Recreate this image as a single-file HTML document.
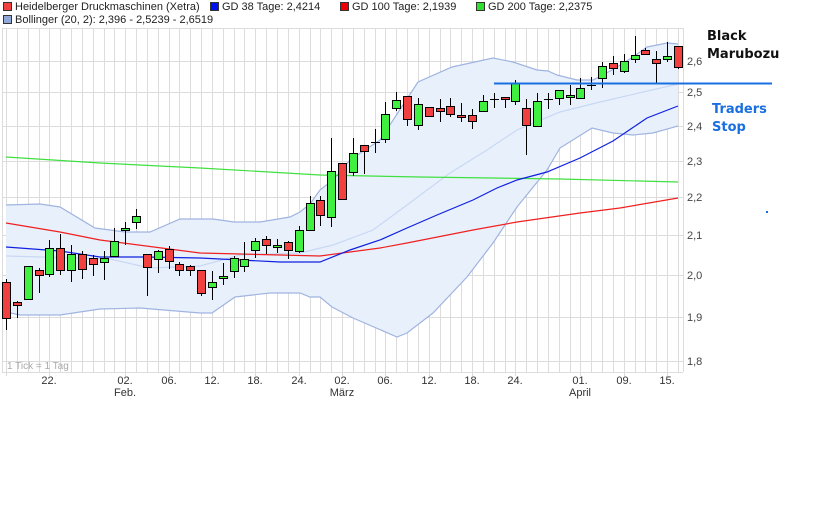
<!DOCTYPE html>
<html><head><meta charset="utf-8"><style>
body{margin:0;background:#fff;width:840px;height:525px;overflow:hidden;font-family:"Liberation Sans",sans-serif}
</style></head><body>
<svg width="840" height="525" viewBox="0 0 840 525" xmlns="http://www.w3.org/2000/svg" font-family="Liberation Sans, sans-serif">
<!-- legend -->
<g font-size="11" fill="#222">
<rect x="3.5" y="2.5" width="8" height="8" fill="#f04040" stroke="#333"/><text x="15" y="10">Heidelberger Druckmaschinen (Xetra)</text>
<rect x="210.5" y="2.5" width="8" height="8" fill="#0010ee" stroke="#333"/><text x="222" y="10">GD 38 Tage: 2,4214</text>
<rect x="340.5" y="2.5" width="8" height="8" fill="#ee0000" stroke="#333"/><text x="352" y="10">GD 100 Tage: 2,1939</text>
<rect x="476.5" y="2.5" width="8" height="8" fill="#30e030" stroke="#333"/><text x="488" y="10">GD 200 Tage: 2,2375</text>
<rect x="3.5" y="15.5" width="8" height="8" fill="#90a8d8" stroke="#333"/><text x="15" y="23">Bollinger (20, 2): 2,396 - 2,5239 - 2,6519</text>
</g>
<!-- grid -->
<g stroke="#dcdcdc" stroke-width="1">
<line x1="2" y1="28.5" x2="683" y2="28.5"/>
<line x1="2" y1="61.5" x2="683" y2="61.5"/>
<line x1="2" y1="92.5" x2="683" y2="92.5"/>
<line x1="2" y1="126.5" x2="683" y2="126.5"/>
<line x1="2" y1="161.5" x2="683" y2="161.5"/>
<line x1="2" y1="197.5" x2="683" y2="197.5"/>
<line x1="2" y1="235.5" x2="683" y2="235.5"/>
<line x1="2" y1="275.5" x2="683" y2="275.5"/>
<line x1="2" y1="317.5" x2="683" y2="317.5"/>
<line x1="2" y1="361.5" x2="683" y2="361.5"/>
<line x1="2.5" y1="28" x2="2.5" y2="372"/>
<line x1="683.5" y1="28" x2="683.5" y2="372"/>
<line x1="2" y1="372.5" x2="683" y2="372.5"/>
</g>
<g stroke="#dcdcdc" stroke-width="1" id="vg">
<path d="M6.5 28V376M17.5 28V372M28.5 28V372M39.5 28V372M49.5 28V376M60.5 28V372M71.5 28V372M82.5 28V372M93.5 28V372M104.5 28V372M114.5 28V372M125.5 28V376M136.5 28V372M147.5 28V372M158.5 28V372M169.5 28V376M179.5 28V372M190.5 28V372M201.5 28V372M212.5 28V376M223.5 28V372M234.5 28V372M244.5 28V372M255.5 28V376M266.5 28V372M277.5 28V372M288.5 28V372M299.5 28V376M310.5 28V372M320.5 28V372M331.5 28V372M342.5 28V376M353.5 28V372M364.5 28V372M375.5 28V372M385.5 28V376M396.5 28V372M407.5 28V372M418.5 28V372M429.5 28V376M440.5 28V372M450.5 28V372M461.5 28V372M472.5 28V376M483.5 28V372M494.5 28V372M505.5 28V372M515.5 28V376M526.5 28V372M537.5 28V372M548.5 28V372M559.5 28V372M570.5 28V372M580.5 28V376M591.5 28V372M602.5 28V372M613.5 28V372M624.5 28V376M635.5 28V372M645.5 28V372M656.5 28V372M667.5 28V376M678.5 28V372"/>
</g>
<!-- bollinger -->
<path d="M6,205 L40,204 L60,207 L95,228 L125,232 L150,232 L180,219 L213,219 L234,222 L260,222 L290,217 L300,212 L310,204 L320,190 L333,180 L350,160 L380,140 L418,82 L452,67 L493,58 L513,62 L537,70 L548,71 L557,75 L577,80 L593,80 L612,70 L633,57 L647,47 L667,43 L678,44 L678,126 L653,133 L633,135 L613,133 L592,128 L560,148 L547,170 L517,207 L493,243 L467,277 L433,313 L407,333 L397,337 L353,318 L332,307 L320,297 L310,297 L300,293 L270,293 L235,297 L212,313 L200,313 L140,308 L100,309 L60,315 L20,315 L6,312 Z" fill="#e8f0fc" stroke="none"/>
<polyline points="6,205 40,204 60,207 95,228 125,232 150,232 180,219 213,219 234,222 260,222 290,217 300,212 310,204 320,190 333,180 350,160 380,140 418,82 452,67 493,58 513,62 537,70 548,71 557,75 577,80 593,80 612,70 633,57 647,47 667,43 678,44" fill="none" stroke="#a0b4e0" stroke-width="1.2"/>
<polyline points="6,312 20,315 60,315 100,309 140,308 200,313 212,313 235,297 270,293 300,293 310,297 320,297 332,307 353,318 397,337 407,333 433,313 467,277 493,243 517,207 547,170 560,148 592,128 613,133 633,135 653,133 678,126" fill="none" stroke="#a0b4e0" stroke-width="1.2"/>
<polyline points="6,256 110,259 150,268 200,266 240,255 300,253 333,245 373,230 407,205 450,173 487,150 517,130 560,112 600,102 678,84" fill="none" stroke="#c8d8f4" stroke-width="1.2"/>
<!-- MAs -->
<polyline points="6,157 100,163 200,168 320,175 420,177 560,179 678,182" fill="none" stroke="#40e040" stroke-width="1.2"/>
<polyline points="6,223 60,232 100,240 200,253 280,255 320,256 380,248 407,243 473,230 517,222 580,213 620,208 678,198" fill="none" stroke="#f02020" stroke-width="1.2"/>
<polyline points="6,247 60,251 100,257 145,257 200,258 280,262 320,262 350,250 380,240 407,228 437,215 473,200 497,188 517,180 547,172 580,158 613,141 647,118 678,106" fill="none" stroke="#1020e0" stroke-width="1.2"/>
<!-- candles -->
<g stroke="#000" stroke-width="1">
<path d="M6.5 279V330M17.5 301V318M28.5 266V299M39.5 268V293M49.5 240V277M60.5 234V275M71.5 245V282M82.5 251V279M93.5 255V276M104.5 251V280M114.5 228V257M125.5 222V245M136.5 209V229M147.5 254V296M158.5 250V273M169.5 246V269M179.5 262V276M190.5 265V276M201.5 270V296M212.5 271V300M223.5 263V285M234.5 256V278M244.5 242V272M255.5 238V258M266.5 236V254M277.5 239V253M288.5 241V259M299.5 226V253M310.5 196V230M320.5 196V226M331.5 138V227M342.5 163V199M353.5 138V176M364.5 145V174M375.5 129V153M385.5 102V143M396.5 92V111M407.5 96V126M418.5 98V130M429.5 107V116M440.5 99V122M450.5 98V117M461.5 103V122M472.5 109V129M483.5 95V111M494.5 93V108M505.5 97V108M515.5 80V105M526.5 99V155M537.5 93V127M548.5 93V109M559.5 90V105M570.5 85V105M580.5 78V98M591.5 77V90M602.5 62V88M613.5 56V75M624.5 54V73M635.5 36V63M645.5 48V55M656.5 51V83M667.5 42V62M678.5 46V69"/>
<path d="M371 142.5H380M490 99.5H499M544 99.5H553M587 85.5H596"/>
</g>
<g stroke="#000" stroke-width="1" fill="#f04040">
<rect x="2.5" y="282.5" width="8" height="36"/>
<rect x="13.5" y="302.5" width="8" height="3"/>
<rect x="35.5" y="270.5" width="8" height="5"/>
<rect x="56.5" y="248.5" width="8" height="22"/>
<rect x="78.5" y="254.5" width="8" height="15"/>
<rect x="89.5" y="258.5" width="8" height="6"/>
<rect x="143.5" y="254.5" width="8" height="13"/>
<rect x="165.5" y="249.5" width="8" height="12"/>
<rect x="175.5" y="264.5" width="8" height="6"/>
<rect x="186.5" y="266.5" width="8" height="4"/>
<rect x="197.5" y="270.5" width="8" height="23"/>
<rect x="262.5" y="239.5" width="8" height="6"/>
<rect x="284.5" y="242.5" width="8" height="8"/>
<rect x="316.5" y="200.5" width="8" height="15"/>
<rect x="338.5" y="163.5" width="8" height="36"/>
<rect x="360.5" y="145.5" width="8" height="6"/>
<rect x="403.5" y="96.5" width="8" height="23"/>
<rect x="425.5" y="107.5" width="8" height="9"/>
<rect x="436.5" y="108.5" width="8" height="3"/>
<rect x="446.5" y="106.5" width="8" height="8"/>
<rect x="457.5" y="115.5" width="8" height="2"/>
<rect x="468.5" y="115.5" width="8" height="6"/>
<rect x="501.5" y="97.5" width="8" height="2"/>
<rect x="522.5" y="108.5" width="8" height="17"/>
<rect x="609.5" y="63.5" width="8" height="5"/>
<rect x="641.5" y="50.5" width="8" height="4"/>
<rect x="652.5" y="59.5" width="8" height="4"/>
<rect x="674.5" y="46.5" width="8" height="21"/>
</g>
<g stroke="#000" stroke-width="1" fill="#40f040">
<rect x="24.5" y="266.5" width="8" height="33"/>
<rect x="45.5" y="248.5" width="8" height="26"/>
<rect x="67.5" y="254.5" width="8" height="16"/>
<rect x="100.5" y="258.5" width="8" height="4"/>
<rect x="110.5" y="241.5" width="8" height="15"/>
<rect x="121.5" y="228.5" width="8" height="2"/>
<rect x="132.5" y="216.5" width="8" height="6"/>
<rect x="154.5" y="251.5" width="8" height="8"/>
<rect x="208.5" y="282.5" width="8" height="5"/>
<rect x="219.5" y="276.5" width="8" height="2"/>
<rect x="230.5" y="258.5" width="8" height="13"/>
<rect x="240.5" y="259.5" width="8" height="7"/>
<rect x="251.5" y="241.5" width="8" height="9"/>
<rect x="273.5" y="245.5" width="8" height="2"/>
<rect x="295.5" y="230.5" width="8" height="21"/>
<rect x="306.5" y="203.5" width="8" height="27"/>
<rect x="327.5" y="171.5" width="8" height="46"/>
<rect x="349.5" y="153.5" width="8" height="19"/>
<rect x="381.5" y="114.5" width="8" height="25"/>
<rect x="392.5" y="100.5" width="8" height="8"/>
<rect x="414.5" y="104.5" width="8" height="21"/>
<rect x="479.5" y="101.5" width="8" height="10"/>
<rect x="511.5" y="83.5" width="8" height="18"/>
<rect x="533.5" y="101.5" width="8" height="25"/>
<rect x="555.5" y="90.5" width="8" height="8"/>
<rect x="566.5" y="95.5" width="8" height="2"/>
<rect x="576.5" y="88.5" width="8" height="10"/>
<rect x="598.5" y="66.5" width="8" height="12"/>
<rect x="620.5" y="61.5" width="8" height="10"/>
<rect x="631.5" y="55.5" width="8" height="4"/>
<rect x="663.5" y="56.5" width="8" height="3"/>
</g>
<!-- traders stop line -->
<line x1="494" y1="83.5" x2="772" y2="83.5" stroke="#1a6fe0" stroke-width="2"/>
<rect x="766" y="211" width="2" height="2" fill="#1a6fe0"/>
<!-- y labels -->
<g font-size="11" fill="#444">
<text x="687" y="65">2,6</text><text x="687" y="96">2,5</text><text x="687" y="130">2,4</text><text x="687" y="165">2,3</text><text x="687" y="201">2,2</text><text x="687" y="239">2,1</text><text x="687" y="279">2,0</text><text x="687" y="321">1,9</text><text x="687" y="365">1,8</text>
</g>
<!-- x labels -->
<g font-size="11" fill="#333" text-anchor="middle">
<text x="49" y="384">22.</text><text x="125" y="384">02.</text><text x="169" y="384">06.</text><text x="212" y="384">12.</text><text x="255" y="384">18.</text><text x="299" y="384">24.</text><text x="342" y="384">02.</text><text x="385" y="384">06.</text><text x="429" y="384">12.</text><text x="472" y="384">18.</text><text x="515" y="384">24.</text><text x="580" y="384">01.</text><text x="624" y="384">09.</text><text x="667" y="384">15.</text>
<text x="125" y="396">Feb.</text><text x="342" y="396">März</text><text x="580" y="396">April</text>
</g>
<text x="7" y="369" font-size="10" fill="#aaa">1 Tick = 1 Tag</text>
<!-- annotations -->
<g font-family="DejaVu Sans, sans-serif" font-weight="bold" font-size="13">
<text x="707" y="40" fill="#111">Black</text>
<text x="707" y="58" fill="#111">Marubozu</text>
<text x="712" y="113" fill="#1a6fe0">Traders</text>
<text x="712" y="131" fill="#1a6fe0">Stop</text>
</g>
</svg>
</body></html>
